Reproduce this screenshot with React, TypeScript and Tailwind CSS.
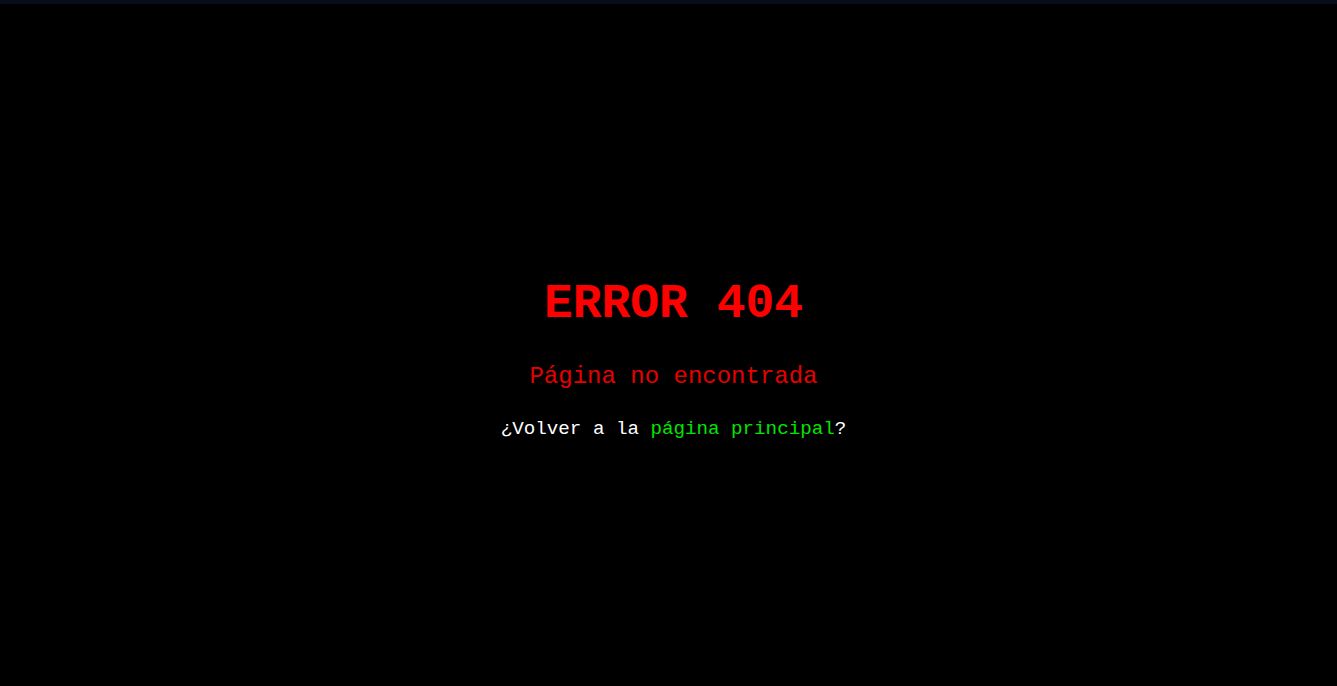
export default function App() {
  return (
    <div className="min-h-screen bg-black flex flex-col font-['Liberation_Mono','Courier_New',monospace]">
      <div className="h-[4px] bg-[#070b1a]" />
      <div className="flex-1 flex flex-col items-center justify-center pt-[30px] pl-[10px] text-center">
        <h1 className="text-[48px] font-bold text-[#ff0000] leading-none">ERROR 404</h1>
        <p className="mt-[37px] text-[24px] text-[#e60000] leading-none">Página no encontrada</p>
        <p className="mt-[31px] text-[19.2px] text-white leading-none">
          ¿Volver a la <a href="#" className="text-[#00e600]">página principal</a>?
        </p>
      </div>
    </div>
  );
}
